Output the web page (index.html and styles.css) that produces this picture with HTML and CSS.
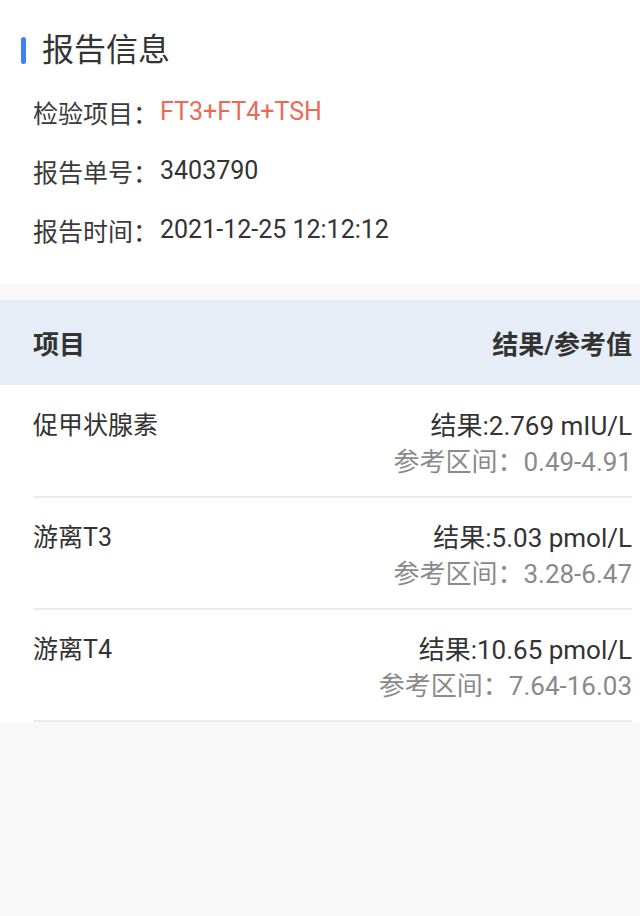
FILE: index.html
```html
<!DOCTYPE html>
<html lang="zh-CN">
<head>
<meta charset="utf-8">
<title>报告信息</title>
<link rel="stylesheet" href="styles.css">
</head>
<body>
<section class="info">
  <h1 class="title"><span class="title-bar"></span>报告信息</h1>
  <div class="info-row"><span class="label">检验项目：</span><span class="value red">FT3+FT4+TSH</span></div>
  <div class="info-row"><span class="label">报告单号：</span><span class="value">3403790</span></div>
  <div class="info-row"><span class="label">报告时间：</span><span class="value">2021-12-25 12:12:12</span></div>
</section>
<section class="table">
  <div class="thead"><span>项目</span><span>结果/参考值</span></div>
  <div class="tbody">
    <div class="row">
      <div class="name">促甲状腺素</div>
      <div class="res"><div class="val">结果:2.769 mIU/L</div><div class="ref">参考区间：0.49-4.91</div></div>
    </div>
    <div class="row">
      <div class="name">游离T3</div>
      <div class="res"><div class="val">结果:5.03 pmol/L</div><div class="ref">参考区间：3.28-6.47</div></div>
    </div>
    <div class="row">
      <div class="name">游离T4</div>
      <div class="res"><div class="val">结果:10.65 pmol/L</div><div class="ref">参考区间：7.64-16.03</div></div>
    </div>
  </div>
</section>
</body>
</html>
```
FILE: styles.css
```css
html, body {
  margin: 0;
  padding: 0;
}
body {
  background: #f8f8f8;
  font-family: Roboto, "Noto Sans CJK SC", sans-serif;
  color: #333;
  width: 640px;
  min-height: 916px;
}
.info {
  background: #fff;
  padding: 30px 0 25px 33px;
  margin-bottom: 16px;
}
.title {
  margin: 0 0 12px -12px;
  display: flex;
  align-items: center;
  font-size: 32px;
  font-weight: 400;
  line-height: 40px;
  color: #333;
}
.title-bar {
  width: 5px;
  height: 27px;
  border-radius: 3px;
  background: #3c82f0;
  margin-right: 16px;
}
.info-row {
  display: flex;
  align-items: center;
  height: 59px;
  font-size: 25px;
  color: #333;
}
.label {
  color: #3a3a3a;
}
.value {
  margin-left: 2px;
}
.red {
  color: #ec6a55;
}
.table {
  background: #fff;
}
.thead {
  display: flex;
  justify-content: space-between;
  align-items: center;
  height: 85px;
  padding: 0 8px 0 33px;
  background: #e6edf7;
  font-size: 26px;
  font-weight: 700;
  color: #333;
}
.tbody {
  padding: 0 8px 0 33px;
}
.row {
  display: flex;
  justify-content: space-between;
  align-items: flex-start;
  padding: 22px 0 16px;
  border-bottom: 2px solid #ebebeb;
  font-size: 26px;
  line-height: 36px;
}
.row:first-child {
  padding-top: 23px;
}
.name {
  color: #333;
  font-size: 25px;
}
.res {
  text-align: right;
}
.val {
  color: #333;
}
.ref {
  color: #8a8a8a;
}
```
